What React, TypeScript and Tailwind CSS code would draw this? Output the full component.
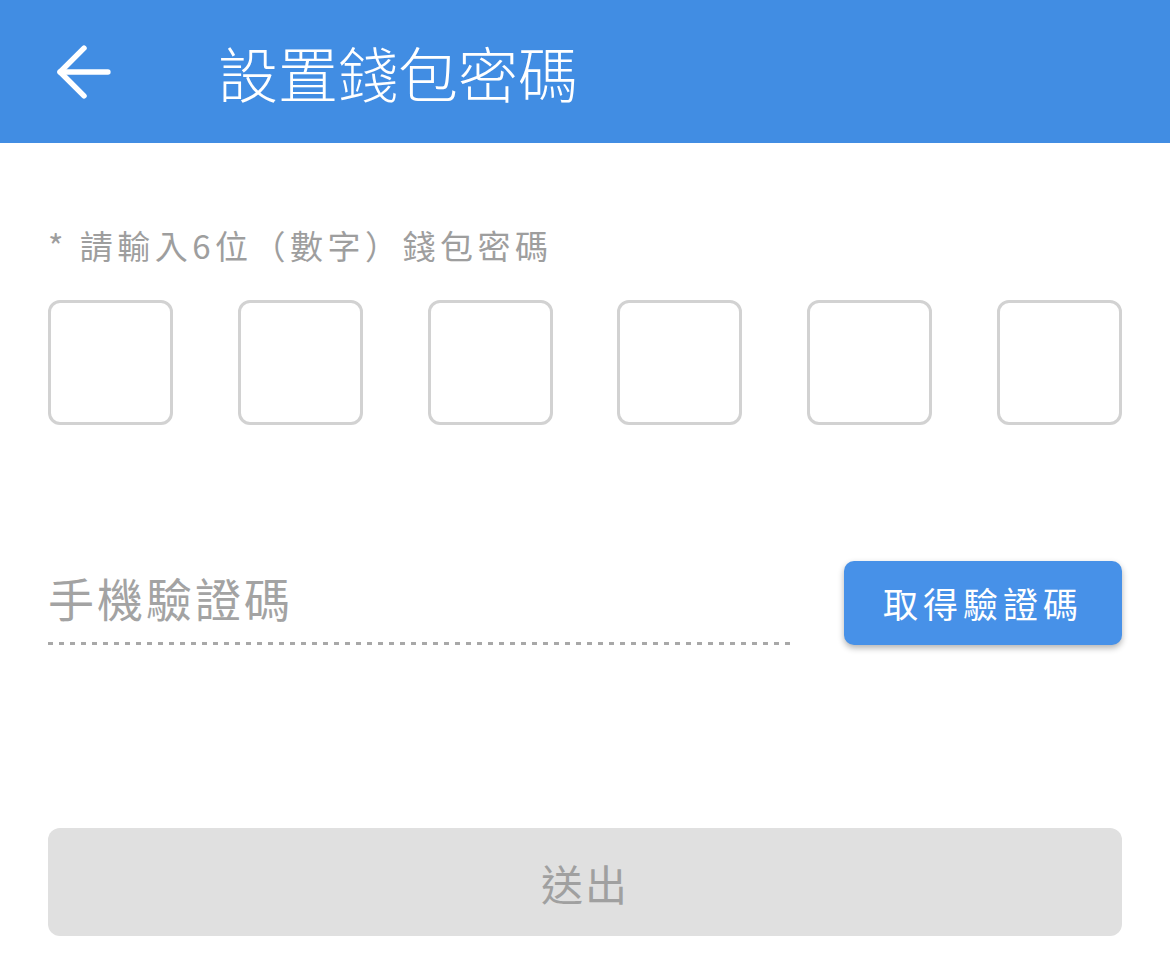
import { ArrowLeft } from 'lucide-react'

const font = '"Noto Sans CJK TC", "Noto Sans", sans-serif'

export default function App() {
  const boxes = [0, 1, 2, 3, 4, 5]

  return (
    <div className="min-h-[976px] w-full bg-white" style={{ fontFamily: font }}>
      {/* Header */}
      <header className="flex h-[143px] items-center bg-[#418de3] text-white">
        <div className="flex w-[218px] pl-[43px]">
          <ArrowLeft size={82} strokeWidth={1.6} />
        </div>
        <h1 className="text-[60px] leading-none font-light">設置錢包密碼</h1>
      </header>

      <main className="px-[48px]">
        {/* Password label */}
        <p className="mt-[77px] text-[33px] leading-[51px] tracking-[4.5px] text-[#9e9e9e]">
          * 請輸入6位（數字）錢包密碼
        </p>

        {/* 6 digit boxes */}
        <div className="mt-[29px] flex justify-between">
          {boxes.map((i) => (
            <div
              key={i}
              className="h-[125px] w-[125px] rounded-[12px] border-[3px] border-[#d2d2d2] bg-white"
            />
          ))}
        </div>

        {/* Phone verification */}
        <div className="mt-[136px] flex items-end justify-between">
          <div className="flex w-[748px] flex-col">
            <span className="text-[46px] leading-[60px] tracking-[3px] text-[#a3a3a3]">手機驗證碼</span>
            <div className="mt-[15px] h-[3px] w-full bg-[linear-gradient(to_right,#a8a8a8_50%,transparent_50%)] bg-[length:11px_3px] bg-repeat-x" />
          </div>
          <button className="flex h-[84px] w-[278px] items-center justify-center rounded-[10px] bg-[#4791e8] text-[35px] tracking-[5px] text-white shadow-[0_3px_6px_rgba(0,0,0,0.3)]">
            取得驗證碼
          </button>
        </div>

        {/* Submit */}
        <button className="mt-[183px] flex h-[108px] w-full items-center justify-center rounded-[12px] bg-[#e0e0e0] text-[42px] tracking-[2px] text-[#a0a0a0]">
          送出
        </button>
      </main>
    </div>
  )
}
